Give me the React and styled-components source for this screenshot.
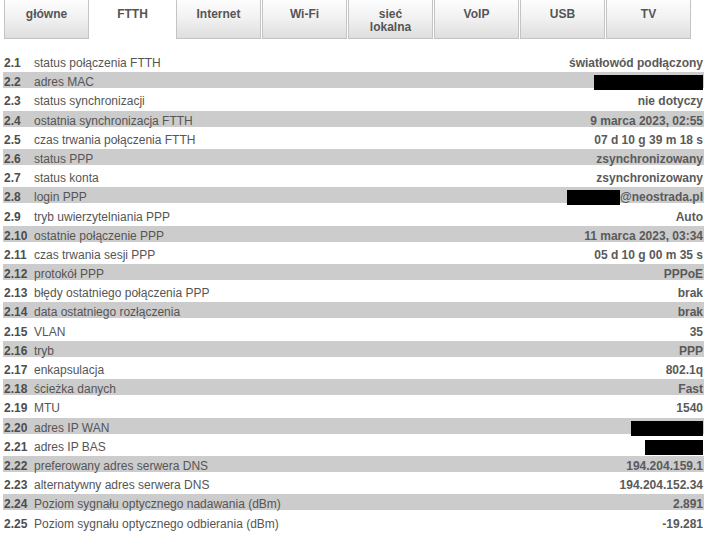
import styled, { createGlobalStyle } from "styled-components";

const GlobalStyle = createGlobalStyle`
  html, body {
    margin: 0;
    padding: 0;
    background: #ffffff;
  }
  body {
    font-family: "Liberation Sans", Arial, sans-serif;
    font-size: 12px;
    color: #555555;
  }
`;

const Page = styled.div`
  width: 712px;
  height: 539px;
  overflow: hidden;
  padding-left: 4px;
  box-sizing: border-box;
`;

const TabBar = styled.nav`
  display: flex;
  height: 39px;
`;

const Tab = styled.div`
  width: 85px;
  margin-right: 1px;
  box-sizing: border-box;
  height: 39px;
  padding-top: 8px;
  text-align: center;
  font-weight: bold;
  font-size: 12px;
  line-height: 13px;
  color: #555555;
  border: 1px solid ${(p) => (p.$active ? "transparent" : "#c4c4c4")};
  border-top: none;
  background: ${(p) =>
    p.$active ? "#ffffff" : "linear-gradient(#fdfdfd, #f2f2f2 45%, #dedede)"};
`;

const Table = styled.div`
  margin-top: 14px;
  margin-left: -1px;
  width: 701px;
  display: grid;
  row-gap: 3.2px;
`;

const Row = styled.div`
  display: grid;
  grid-template-columns: 30px 1fr auto;
  align-items: center;
  height: 16px;
  padding: 0 1px;
  background: ${(p) => (p.$shaded ? "#cccccc" : "transparent")};
  line-height: 16px;
  white-space: nowrap;
`;

const Num = styled.span`
  font-weight: bold;
  color: #4d4d4d;
  padding-top: 2px;
`;

const Label = styled.span`
  color: #555555;
  padding-top: 2px;
`;

const Value = styled.span`
  font-weight: bold;
  color: #5a5a5a;
  text-align: right;
  display: flex;
  align-items: center;
  justify-content: flex-end;
  padding-top: 2px;
`;

const Redacted = styled.span`
  display: inline-block;
  width: ${(p) => p.$w}px;
  height: 15px;
  background: #000000;
  margin-top: ${(p) => p.$dy || 0}px;
`;

const tabs = [
  "główne",
  "FTTH",
  "Internet",
  "Wi-Fi",
  "sieć\nlokalna",
  "VoIP",
  "USB",
  "TV",
];

const rows = [
  ["status połączenia FTTH", "światłowód podłączony"],
  ["adres MAC", { hide: 109 }],
  ["status synchronizacji", "nie dotyczy"],
  ["ostatnia synchronizacja FTTH", "9 marca 2023, 02:55"],
  ["czas trwania połączenia FTTH", "07 d 10 g 39 m 18 s"],
  ["status PPP", "zsynchronizowany"],
  ["status konta", "zsynchronizowany"],
  ["login PPP", { hide: 53, after: "@neostrada.pl" }],
  ["tryb uwierzytelniania PPP", "Auto"],
  ["ostatnie połączenie PPP", "11 marca 2023, 03:34"],
  ["czas trwania sesji PPP", "05 d 10 g 00 m 35 s"],
  ["protokół PPP", "PPPoE"],
  ["błędy ostatniego połączenia PPP", "brak"],
  ["data ostatniego rozłączenia", "brak"],
  ["VLAN", "35"],
  ["tryb", "PPP"],
  ["enkapsulacja", "802.1q"],
  ["ścieżka danych", "Fast"],
  ["MTU", "1540"],
  ["adres IP WAN", { hide: 72 }],
  ["adres IP BAS", { hide: 58 }],
  ["preferowany adres serwera DNS", "194.204.159.1"],
  ["alternatywny adres serwera DNS", "194.204.152.34"],
  ["Poziom sygnału optycznego nadawania (dBm)", "2.891"],
  ["Poziom sygnału optycznego odbierania (dBm)", "-19.281"],
];

function renderValue(v) {
  if (typeof v === "string") return v;
  return (
    <>
      <Redacted $w={v.hide} $dy={1} />
      {v.after}
    </>
  );
}

export default function App() {
  return (
    <Page>
      <GlobalStyle />
      <TabBar>
        {tabs.map((t) => (
          <Tab key={t} $active={t === "FTTH"}>
            {t.split("\n").map((line) => (
              <div key={line}>{line}</div>
            ))}
          </Tab>
        ))}
      </TabBar>
      <Table>
        {rows.map(([label, value], i) => (
          <Row key={label} $shaded={i % 2 === 1}>
            <Num>2.{i + 1}</Num>
            <Label>{label}</Label>
            <Value>{renderValue(value)}</Value>
          </Row>
        ))}
      </Table>
    </Page>
  );
}
